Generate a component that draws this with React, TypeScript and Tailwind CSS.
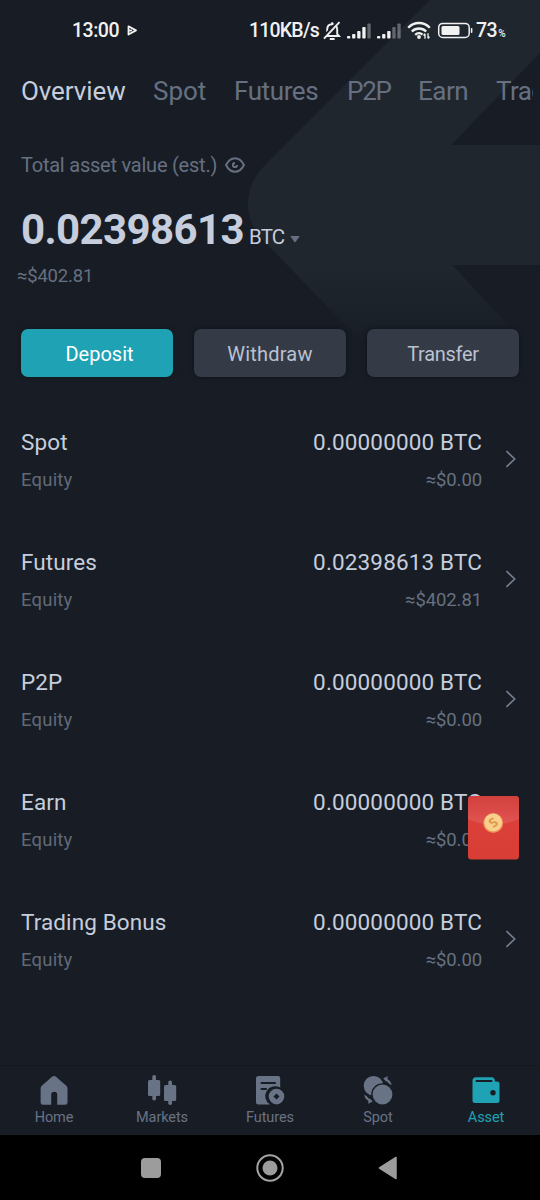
import React from "react"
import clsx from "clsx"

const tabs = [
  { label: "Overview", className: "w-[132px] tracking-[-0.1px]" },
  { label: "Spot", className: "w-[81px]" },
  { label: "Futures", className: "w-[113px] tracking-[-0.4px]" },
  { label: "P2P", className: "w-[71px] tracking-[-1.2px]" },
  { label: "Earn", className: "w-[78px] tracking-[-0.5px]" },
  { label: "Trad", className: "w-[37px] overflow-hidden tracking-[-0.6px]" },
]

const accounts = [
  { name: "Spot", amount: "0.00000000 BTC", value: "≈$0.00" },
  { name: "Futures", amount: "0.02398613 BTC", value: "≈$402.81" },
  { name: "P2P", amount: "0.00000000 BTC", value: "≈$0.00" },
  { name: "Earn", amount: "0.00000000 BTC", value: "≈$0.00" },
  { name: "Trading Bonus", amount: "0.00000000 BTC", value: "≈$0.00" },
]

const Signal: React.FC<{ level: number }> = ({ level }) => (
  <svg width="24" height="16" viewBox="0 0 24 16" fill="#f1f1f1">
    {[2.5, 4.5, 7.5, 11.5, 15].map((h, i) => (
      <rect
        key={h}
        x={i * 5.1}
        y={15.5 - h}
        width="3.3"
        height={h}
        rx="0.8"
        opacity={i < level ? 1 : 0.35}
      />
    ))}
  </svg>
)

const StatusBar: React.FC = () => (
  <div className="flex h-[61px] shrink-0 items-center pl-[72px] text-[19.5px] font-medium text-[#f1f1f1]">
    <span className="w-[55px] tracking-[-0.5px]">13:00</span>
    <svg width="11" height="11" viewBox="0 0 11 11">
      <path
        d="M1.5 1.3 9 5.4 1.5 9.5ZM1.5 5.6 5 5.4"
        fill="none"
        stroke="#f1f1f1"
        strokeWidth="1.8"
        strokeLinejoin="round"
      />
    </svg>
    <span className="ml-[111px] w-[74px] whitespace-nowrap tracking-[-0.8px]">
      110KB/s
    </span>
    <svg width="18" height="20" viewBox="0 0 18 20" fill="none" stroke="#f1f1f1" strokeWidth="1.9">
      <path d="M2.2 15H16L14.2 12.8V8.5C14.2 5.2 12.2 3.3 9.2 3.3S4.2 5.2 4.2 8.5V12.8Z" />
      <path d="M9.2 3.3V1.3M6.8 18H11.6" />
      <path d="M15 .8 0 16.7" stroke="#181d25" strokeWidth="3" />
      <path d="M16.5 1.2 1 17.7" />
    </svg>
    <span className="ml-[6px]"><Signal level={4} /></span>
    <span className="ml-[6px]"><Signal level={3} /></span>
    <svg className="ml-[6px]" width="24" height="19" viewBox="0 0 24 19" fill="none" stroke="#f1f1f1" strokeWidth="2.3">
      <path d="M1.2 6.7C7.3.4 16.7.4 22.8 6.7M4.8 10.5C9 6.5 15 6.5 19.2 10.5M8.2 13.8C10.5 11.7 13.5 11.7 15.5 13.6" />
      <circle cx="12" cy="16" r="1.9" fill="#f1f1f1" stroke="none" />
      <path d="M18 17.8V12.7M16.5 14.5 18 12.7M21 12.3V17.3M22.5 15.8 21 17.5" strokeWidth="1.3" />
    </svg>
    <svg className="ml-[6px]" width="36" height="17" viewBox="0 0 36 17">
      <rect x="1.7" y="1.4" width="30.5" height="14" rx="4" fill="none" stroke="#f1f1f1" strokeWidth="1.5" />
      <rect x="4.5" y="4" width="18" height="9" rx="1.5" fill="#f1f1f1" />
      <rect x="33.8" y="6" width="1.6" height="5" rx="0.8" fill="#f1f1f1" />
    </svg>
    <span className="ml-[3px] tracking-[-0.5px]">73</span>
    <span className="mt-[5px] ml-px text-[10px]">%</span>
  </div>
)

// Large faint arrow behind the balance
const Backdrop: React.FC = () => (
  <svg className="absolute top-0 left-0" width="540" height="400" viewBox="0 0 540 400">
    <defs>
      <linearGradient id="arrow" x1="0" y1="0" x2="0" y2="340" gradientUnits="userSpaceOnUse">
        <stop offset="0" stopColor="#1f262e" />
        <stop offset="0.8" stopColor="#1f262e" />
        <stop offset="1" stopColor="#191e26" />
      </linearGradient>
    </defs>
    <path
      d="M430 0H540V53L451 145H540V265H452L522 340H360L266 243Q248 225 248 205Q248 182 265 165Z"
      fill="url(#arrow)"
    />
  </svg>
)

const Envelope: React.FC = () => (
  <svg className="absolute top-[795px] left-[467px]" width="53" height="65" viewBox="0 0 53 65">
    <defs>
      <linearGradient id="paper" x1="0" y1="0" x2="0" y2="1">
        <stop offset="0" stopColor="#dc433c" />
        <stop offset="1" stopColor="#d83d35" />
      </linearGradient>
      <linearGradient id="flap" x1="0" y1="0" x2="0" y2="1">
        <stop offset="0" stopColor="#d2403d" />
        <stop offset="1" stopColor="#e05552" />
      </linearGradient>
    </defs>
    <rect x="1" y="1" width="51" height="63.5" rx="3.5" fill="url(#paper)" />
    <path d="M1 24V4.5Q1 1 4.5 1H48.5Q52 1 52 4.5V24Q26.5 35 1 24Z" fill="url(#flap)" />
    <circle cx="26.2" cy="28" r="10" fill="#ef8d55" />
    <circle cx="26.2" cy="27.5" r="9" fill="#f8cf8c" />
    <path
      d="M26.5 23 23 25Q22 26.5 23.5 27.3L26 28.2M26 32 29.5 30Q30.5 28.5 29 27.6L26.5 26.7"
      fill="none"
      stroke="#e09a4a"
      strokeWidth="2"
    />
  </svg>
)

const HomeIcon = () => (
  <svg width="30" height="30" viewBox="0 0 30 30" fill="currentColor">
    <path d="M13.3 1.6Q15 .2 16.7 1.6L27.3 10.8Q28.5 12 28.5 13.5V27.5Q28.5 29.7 26.3 29.7H18.2V19.5Q18.2 16.8 15.2 16.8T12.2 19.5V29.7H3.8Q1.6 29.7 1.6 27.5V13.5Q1.6 12 2.8 10.8Z" />
  </svg>
)

const MarketsIcon = () => (
  <svg width="30" height="30" viewBox="0 0 30 30" fill="currentColor">
    <rect x="1" y="5" width="12.2" height="16" rx="1.5" />
    <rect x="5.3" y="0" width="3.7" height="25.5" rx="1.7" />
    <rect x="17" y="10" width="12.2" height="16" rx="1.5" />
    <rect x="21.3" y="5.5" width="3.7" height="24.5" rx="1.7" />
  </svg>
)

const FuturesIcon = () => (
  <svg width="30" height="30" viewBox="0 0 30 30" fill="currentColor">
    <path d="M3.5 1H23Q25.2 1 25.2 3.2V12.6A9.5 9.5 0 0 0 15 29.5H3.5Q1 29.5 1 27V3.5Q1 1 3.5 1Z" />
    <path d="M6.5 8H20M6.5 14H11" stroke="#181d25" strokeWidth="2.2" strokeLinecap="round" />
    <circle cx="21.5" cy="21.6" r="9.2" fill="#181d25" />
    <circle cx="21.5" cy="21.6" r="7.8" />
    <path d="M21.5 18.6 24.5 21.6 21.5 24.6 18.5 21.6Z" fill="#181d25" />
  </svg>
)

const SpotIcon = () => (
  <svg width="30" height="30" viewBox="0 0 30 30" fill="currentColor">
    <circle cx="10.5" cy="10.8" r="9.8" />
    <circle cx="19.5" cy="19.5" r="11.3" fill="#181d25" />
    <circle cx="19.5" cy="19.5" r="9.9" />
    <path d="M20.2 3.2 25 1.3 24.3 4Q28 6 28.6 10.2L25.8 8.5Q24.5 6 22.8 6.2Z" />
    <path d="M9.8 26.5 5 28.7 5.5 26Q2 24 1.2 19.5L4 21.5Q5.5 24 7 23.7Z" />
  </svg>
)

const AssetIcon = () => (
  <svg width="30" height="30" viewBox="0 0 30 30" fill="currentColor">
    <path d="M5 2.3H20.5Q23.8 2.3 24 6.5H26Q28.5 6.5 28.5 9V25.5Q28.5 28 26 28H4Q1.5 28 1.5 25.5V6Q1.5 2.3 5 2.3Z" />
    <path d="M5.5 6H20.5" stroke="#181d25" strokeWidth="2" strokeLinecap="round" />
    <circle cx="22" cy="17.8" r="2.7" fill="#181d25" />
  </svg>
)

const navItems = [
  { label: "Home", Icon: HomeIcon },
  { label: "Markets", Icon: MarketsIcon },
  { label: "Futures", Icon: FuturesIcon },
  { label: "Spot", Icon: SpotIcon },
  { label: "Asset", Icon: AssetIcon, active: true },
]

export default function App() {
  return (
    <div className="relative h-[1200px] w-[540px] overflow-hidden bg-[#181d25] font-['Roboto','Noto_Sans',sans-serif]">
      <Backdrop />
      <div className="relative flex h-full flex-col">
        <StatusBar />

        <div className="ml-[21px] flex h-[60px] shrink-0 text-[26px] leading-[60px] text-[#667080]">
          {tabs.map((tab, i) => (
            <div
              key={tab.label}
              className={clsx(
                "shrink-0 whitespace-nowrap",
                tab.className,
                i === 0 && "text-[#c6cddc]"
              )}
            >
              {tab.label}
            </div>
          ))}
        </div>

        <div className="flex h-[208px] shrink-0 flex-col px-[21px] pt-[32px]">
          <div className="flex h-6 items-center text-[20px] leading-6 tracking-[-0.23px] text-[#667080]">
            Total asset value (est.)
            <svg className="ml-[8px]" width="20" height="16" viewBox="0 0 20 16" fill="none" stroke="currentColor" strokeWidth="2">
              <path d="M1 8Q4.5 1.2 10 1.2T19 8Q15.5 14.8 10 14.8T1 8Z" strokeLinejoin="round" />
              <path d="M10 5.9A2.1 2.1 0 1 0 12.1 8" />
            </svg>
          </div>
          <div className="mt-[28px] flex h-[50px] items-baseline text-[#c6cddc]">
            <span className="text-[42px] leading-[50px] font-bold tracking-[-0.6px]">
              0.02398613
            </span>
            <span className="ml-[5px] text-[20.5px] tracking-[-0.9px]">BTC</span>
            <svg className="ml-[6px]" width="10" height="8" viewBox="0 0 10 8">
              <path d="M1 .5H9L5 6Z" fill="#667080" stroke="#667080" strokeLinejoin="round" />
            </svg>
          </div>
          <div className="mt-[9px] -ml-1 text-[18.5px] leading-6 tracking-[-0.2px] text-[#667080]">
            ≈$402.81
          </div>
        </div>

        <div className="grid h-[48px] shrink-0 grid-cols-3 gap-[21px] px-[21px] text-[20px] text-[#bac2d1]">
          <button className="rounded-[7px] bg-[#1fa2b4] pt-[2px] pl-[5px] text-white shadow-[0_0_4px_#10151b]">
            Deposit
          </button>
          <button className="rounded-[7px] bg-[#343a46] pt-[2px] tracking-[0.2px] shadow-[0_0_5px_#0e1219]">
            Withdraw
          </button>
          <button className="rounded-[7px] bg-[#343a46] pt-[2px] tracking-[-0.3px] shadow-[0_0_5px_#0e1219]">
            Transfer
          </button>
        </div>

        <div className="mt-[22px] flex-1">
          {accounts.map((account) => (
            <div key={account.name} className="flex h-[120px] items-center pr-[24px] pl-[21px]">
              <div className="flex-1">
                <div className="text-[22.5px] leading-8 tracking-[0.1px] text-[#c6cddc]">
                  {account.name}
                </div>
                <div className="mt-[10px] text-[18.5px] leading-6 tracking-[0.2px] text-[#5f6978]">
                  Equity
                </div>
              </div>
              <div className="text-right">
                <div className="text-[22.5px] leading-8 tracking-[0.15px] text-[#c6cddc]">
                  {account.amount}
                </div>
                <div className="mt-[10px] text-[18.5px] leading-6 tracking-[-0.1px] text-[#667080]">
                  {account.value}
                </div>
              </div>
              <svg className="ml-[23px]" width="11" height="18" viewBox="0 0 11 18" fill="none" stroke="#768091" strokeWidth="1.6">
                <path d="M1.5 1.2 9.7 9 1.5 16.8" />
              </svg>
            </div>
          ))}
        </div>

        <div className="grid h-[70px] shrink-0 grid-cols-5 border-t border-[#141920] pt-[9px]">
          {navItems.map(({ label, Icon, active }) => (
            <div
              key={label}
              className={clsx(
                "flex flex-col items-center text-[14.5px] leading-[22px]",
                active ? "text-[#1fa2b4]" : "text-[#687386]"
              )}
            >
              <Icon />
              <span className="mt-[2px] tracking-[-0.1px]">{label}</span>
            </div>
          ))}
        </div>

        <div className="flex h-[65px] shrink-0 items-center bg-black">
          <div className="ml-[141px] size-5 rounded-[4px] bg-[#9c9c9c]" />
          <svg className="ml-[95px]" width="28" height="28" viewBox="0 0 28 28">
            <circle cx="14" cy="14" r="12.7" fill="none" stroke="#a3a3a3" strokeWidth="2" />
            <circle cx="14" cy="14" r="7.5" fill="#9c9c9c" />
          </svg>
          <svg className="ml-[94px]" width="20" height="24" viewBox="0 0 20 24">
            <path d="M1.5 12 18 1.5V22.5Z" fill="#9c9c9c" stroke="#9c9c9c" strokeWidth="1.5" strokeLinejoin="round" />
          </svg>
        </div>
      </div>
      <Envelope />
    </div>
  )
}
